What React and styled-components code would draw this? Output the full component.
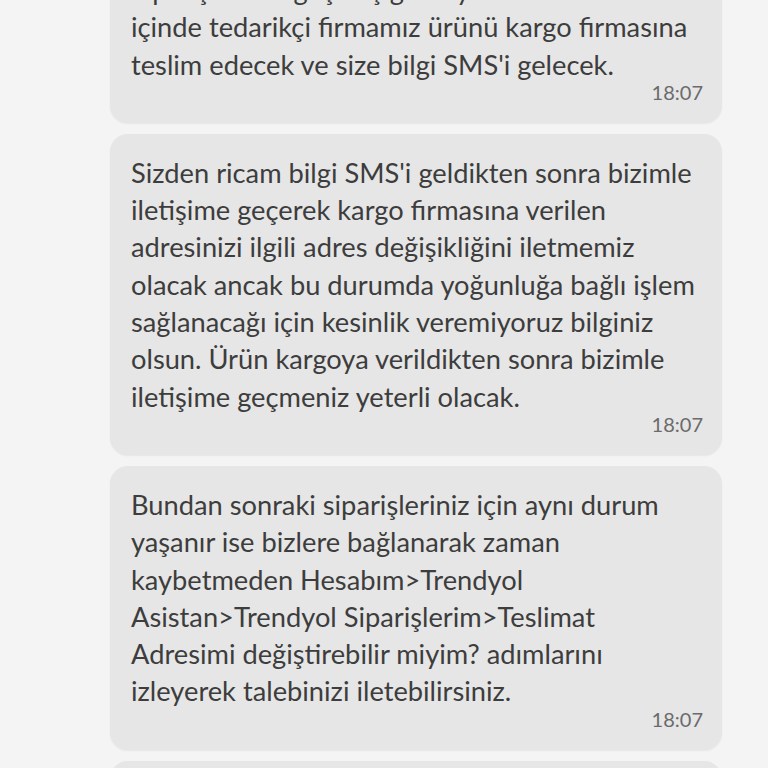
import React from "react";
import styled, { createGlobalStyle } from "styled-components";

const Global = createGlobalStyle`
  html, body { margin: 0; padding: 0; background: #f4f4f4; }
  body { font-family: Lato, "Noto Sans", sans-serif; -webkit-font-smoothing: antialiased; }
`;

const Viewport = styled.div`
  width: 768px;
  height: 768px;
  overflow: hidden;
  background: #f4f4f4;
`;

const List = styled.div`
  display: flex;
  flex-direction: column;
  gap: 11px;
  padding: 0 46px 0 110px;
  margin-top: -49px;
`;

const Bubble = styled.div`
  background: #e6e6e6;
  border-radius: 18px;
  padding: 20px 19px 21px 21px;
  box-shadow: 0 1px 2px rgba(0, 0, 0, 0.06);
  display: flex;
  flex-direction: column;
`;

const Line = styled.span`
  display: block;
  white-space: nowrap;
  font-size: 27.25px;
  line-height: 37.3px;
  color: #3d3d3d;
`;

const Time = styled.span`
  align-self: flex-end;
  font-size: 20px;
  line-height: 20px;
  margin-top: -1px;
  color: #6b6b6b;
`;

const messages = [
  {
    lines: [
      "Siparişiniz en geç 3 iş günü ya da daha az",
      "içinde tedarikçi firmamız ürünü kargo firmasına",
      "teslim edecek ve size bilgi SMS'i gelecek.",
    ],
    time: "18:07",
  },
  {
    lines: [
      "Sizden ricam bilgi SMS'i geldikten sonra bizimle",
      "iletişime geçerek kargo firmasına verilen",
      "adresinizi ilgili adres değişikliğini iletmemiz",
      "olacak ancak bu durumda yoğunluğa bağlı işlem",
      "sağlanacağı için kesinlik veremiyoruz bilginiz",
      "olsun. Ürün kargoya verildikten sonra bizimle",
      "iletişime geçmeniz yeterli olacak.",
    ],
    time: "18:07",
  },
  {
    lines: [
      "Bundan sonraki siparişleriniz için aynı durum",
      "yaşanır ise bizlere bağlanarak zaman",
      "kaybetmeden Hesabım>Trendyol",
      "Asistan>Trendyol Siparişlerim>Teslimat",
      "Adresimi değiştirebilir miyim? adımlarını",
      "izleyerek talebinizi iletebilirsiniz.",
    ],
    time: "18:07",
  },
  {
    lines: ["Başka bir konuda yardımcı olabileceğim bir", "durum var mı?"],
    time: "18:07",
  },
];

export default function App() {
  return (
    <Viewport>
      <Global />
      <List>
        {messages.map((m, i) => (
          <Bubble key={i}>
            {m.lines.map((l, j) => (
              <Line key={j}>{l}</Line>
            ))}
            <Time>{m.time}</Time>
          </Bubble>
        ))}
      </List>
    </Viewport>
  );
}
